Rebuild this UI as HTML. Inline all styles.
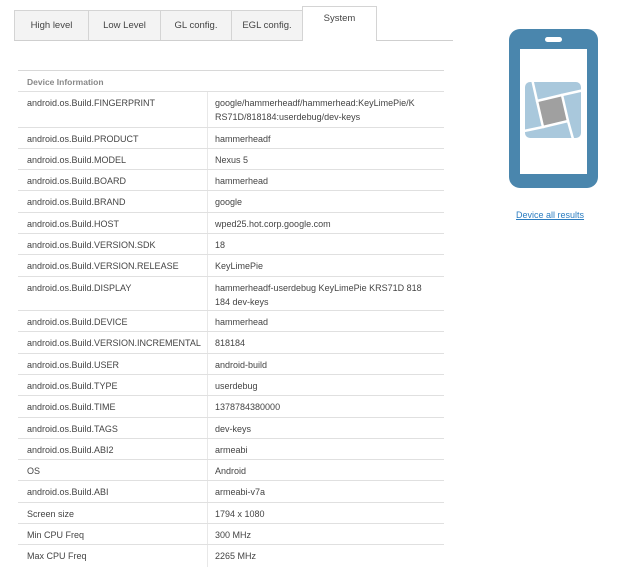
<!DOCTYPE html>
<html><head><meta charset="utf-8"><style>
*{margin:0;padding:0;box-sizing:border-box}
body{width:623px;height:568px;background:#fff;font-family:"Liberation Sans",sans-serif;color:#444;position:relative;overflow:hidden;font-size:9px}
.tab{position:absolute;top:10px;height:31px;background:#f3f3f3;border:1px solid #d4d4d4;border-bottom:none;text-align:center;line-height:30px;font-size:9.5px;color:#444}
.tab.act{background:#fff;top:6px;height:35px;line-height:24px}
.tbl{position:absolute;left:18px;top:70px;width:426px;border-top:1px solid #d8d8d8}
.r{position:relative;border-bottom:1px solid #e0e0e0;height:21.3px}
.r .a{position:absolute;left:9px;top:4px;line-height:14px;white-space:nowrap}
.r .b{position:absolute;left:197px;top:4px;line-height:14px;width:222px}
.r .s{position:absolute;left:189px;top:0;bottom:0;border-left:1px solid #e8e8e8}
.d{height:35.5px}
.h .a{color:#888;font-weight:bold;font-size:8.5px}
</style></head><body>
<div class="tab" style="left:14px;width:75px">High level</div>
<div class="tab" style="left:88px;width:73px">Low Level</div>
<div class="tab" style="left:160px;width:72px">GL config.</div>
<div class="tab" style="left:231px;width:72px">EGL config.</div>
<div class="tab act" style="left:302px;width:75px">System</div>
<div style="position:absolute;left:14px;top:40px;width:288px;border-top:1px solid #cfcfcf"></div>
<div style="position:absolute;left:376px;top:40px;width:77px;border-top:1px solid #cfcfcf"></div>

<div class="tbl">
<div class="r h" style="height:21px"><div class="a">Device Information</div></div>
<div class="r d"><div class="s"></div><div class="a">android.os.Build.FINGERPRINT</div><div class="b">google/hammerheadf/hammerhead:KeyLimePie/K RS71D/818184:userdebug/dev-keys</div></div>
<div class="r"><div class="s"></div><div class="a">android.os.Build.PRODUCT</div><div class="b">hammerheadf</div></div>
<div class="r"><div class="s"></div><div class="a">android.os.Build.MODEL</div><div class="b">Nexus 5</div></div>
<div class="r"><div class="s"></div><div class="a">android.os.Build.BOARD</div><div class="b">hammerhead</div></div>
<div class="r"><div class="s"></div><div class="a">android.os.Build.BRAND</div><div class="b">google</div></div>
<div class="r"><div class="s"></div><div class="a">android.os.Build.HOST</div><div class="b">wped25.hot.corp.google.com</div></div>
<div class="r"><div class="s"></div><div class="a">android.os.Build.VERSION.SDK</div><div class="b">18</div></div>
<div class="r"><div class="s"></div><div class="a">android.os.Build.VERSION.RELEASE</div><div class="b">KeyLimePie</div></div>
<div class="r" style="height:34.5px"><div class="s"></div><div class="a">android.os.Build.DISPLAY</div><div class="b">hammerheadf-userdebug KeyLimePie KRS71D 818<br>184 dev-keys</div></div>
<div class="r"><div class="s"></div><div class="a">android.os.Build.DEVICE</div><div class="b">hammerhead</div></div>
<div class="r"><div class="s"></div><div class="a">android.os.Build.VERSION.INCREMENTAL</div><div class="b">818184</div></div>
<div class="r"><div class="s"></div><div class="a">android.os.Build.USER</div><div class="b">android-build</div></div>
<div class="r"><div class="s"></div><div class="a">android.os.Build.TYPE</div><div class="b">userdebug</div></div>
<div class="r"><div class="s"></div><div class="a">android.os.Build.TIME</div><div class="b">1378784380000</div></div>
<div class="r"><div class="s"></div><div class="a">android.os.Build.TAGS</div><div class="b">dev-keys</div></div>
<div class="r"><div class="s"></div><div class="a">android.os.Build.ABI2</div><div class="b">armeabi</div></div>
<div class="r"><div class="s"></div><div class="a">OS</div><div class="b">Android</div></div>
<div class="r"><div class="s"></div><div class="a">android.os.Build.ABI</div><div class="b">armeabi-v7a</div></div>
<div class="r"><div class="s"></div><div class="a">Screen size</div><div class="b">1794 x 1080</div></div>
<div class="r"><div class="s"></div><div class="a">Min CPU Freq</div><div class="b">300 MHz</div></div>
<div class="r" style="border-bottom:none"><div class="s"></div><div class="a">Max CPU Freq</div><div class="b">2265 MHz</div></div>
</div>

<svg style="position:absolute;left:509px;top:29px" width="89" height="159" viewBox="0 0 89 159">
<rect x="0" y="0" width="89" height="159" rx="11" fill="#4a86ad"/>
<rect x="11" y="20" width="67" height="125" fill="#fff"/>
<rect x="36" y="8" width="17" height="5" rx="2.5" fill="#fff"/>
<rect x="16" y="53" width="56" height="56" rx="5" fill="#a9c8dc"/>
<polygon points="28,72 53,66 59,92 34,98" fill="#a0a0a0"/>
<g stroke="#fff" stroke-width="2.5" fill="none">
<polyline points="23.5,52 28,72 53,66"/>
<polyline points="73,61.5 53,66 59,92"/>
<polyline points="64,110 59,92 34,98"/>
<polyline points="15,102 34,98 28,72"/>
</g>
</svg>
<div style="position:absolute;left:516px;top:210px;font-size:9px;color:#2a7cc0;text-decoration:underline">Device all results</div>
</body></html>
